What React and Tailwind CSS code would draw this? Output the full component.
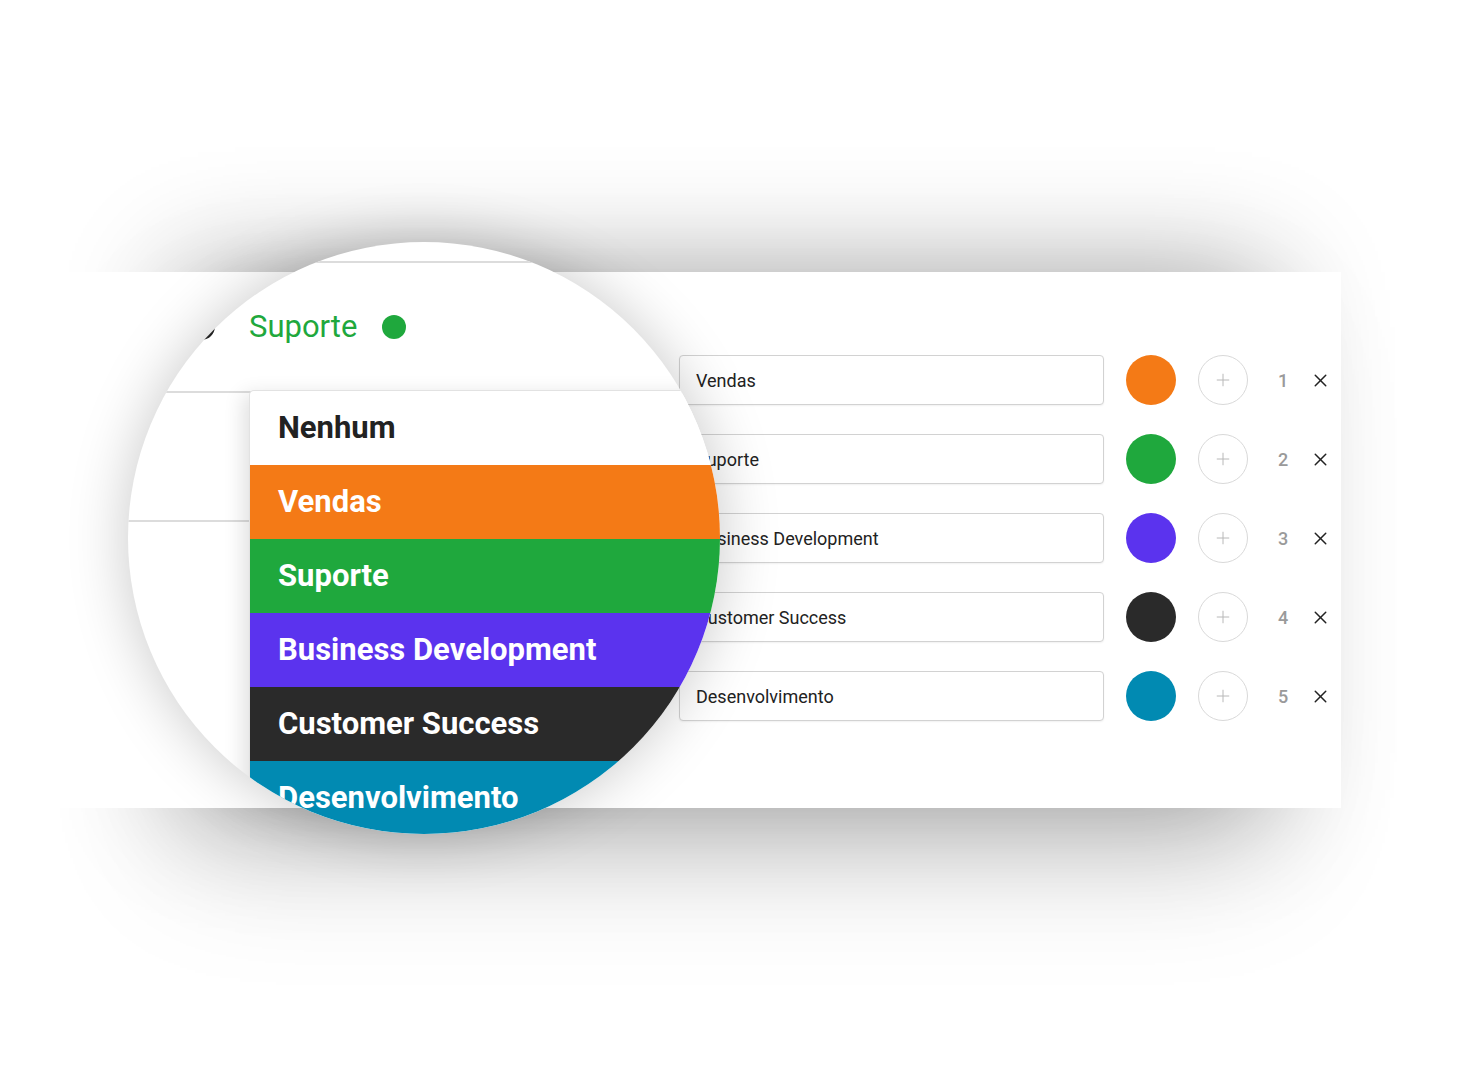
import React from 'react';
import { Plus, X } from 'lucide-react';

const TEAMS = [
  { name: 'Vendas', color: '#F47A16' },
  { name: 'Suporte', color: '#1FA83D' },
  { name: 'Business Development', color: '#5B33EE' },
  { name: 'Customer Success', color: '#2A2A2A' },
  { name: 'Desenvolvimento', color: '#018AB2' },
];

function TeamRow({ team, index }) {
  return (
    <div className="flex items-center">
      <div className="w-[425px] h-[50px] flex items-center pl-4 bg-white border border-[#d2d2d2] rounded-[4px] shadow-[0_1px_2px_rgba(0,0,0,0.06)] text-[18px] text-[#222]">
        {team.name}
      </div>
      <div className="ml-[22px] w-[50px] h-[50px] rounded-full" style={{ backgroundColor: team.color }} />
      <button className="ml-[22px] w-[50px] h-[50px] rounded-full border-[1.5px] border-[#d9d9d9] flex items-center justify-center">
        <Plus size={20} strokeWidth={1.2} className="text-[#b8b8b8]" />
      </button>
      <span className="ml-[22px] w-[26px] text-center text-[18px] font-medium text-[#9a9a9a]">{index + 1}</span>
      <span className="ml-[12px] w-[24px] flex justify-center text-[#222]">
        <X size={21} strokeWidth={1.7} />
      </span>
    </div>
  );
}

function Magnifier() {
  return (
    <div className="absolute left-[128px] top-[242px] w-[592px] h-[592px] rounded-full overflow-hidden bg-white z-20 shadow-[0_0_60px_rgba(0,0,0,0.22)]">
      <div className="mt-[19px] border-t-2 border-[#dcdcdc]" />
      <div className="h-[128px] flex items-center">
        <svg width="30" height="30" viewBox="0 0 30 30" className="ml-[60px]">
          <circle cx="14" cy="15" r="11" fill="none" stroke="#222" strokeWidth="3.5" />
        </svg>
        <span className="ml-[31px] text-[31px] text-[#1FA83D]">Suporte</span>
        <span className="ml-[25px] w-[24px] h-[24px] rounded-full bg-[#1FA83D]" />
      </div>
      <div className="h-[129px] border-t-2 border-[#dcdcdc]" />
      <div className="border-t-2 border-[#dcdcdc]" />

      {/* dropdown */}
      <div className="absolute left-[121px] top-[148px] w-[560px] rounded-tl-[5px] overflow-hidden border-t border-l border-[#e2e2e2] shadow-[-6px_4px_20px_rgba(0,0,0,0.12)] bg-white">
        <div className="h-[74px] flex items-center pl-[28px] text-[31px] font-bold text-[#222]">Nenhum</div>
        {TEAMS.map((t) => (
          <div
            key={t.name}
            className="h-[74px] flex items-center pl-[28px] text-[31px] font-bold text-white"
            style={{ backgroundColor: t.color }}
          >
            {t.name}
          </div>
        ))}
      </div>
    </div>
  );
}

export default function App() {
  return (
    <div className="relative w-[1480px] h-[1080px] bg-white overflow-hidden font-['Roboto',sans-serif]">
      <div className="pt-[272px] relative">
        {/* card shadow */}
        <div className="absolute left-[180px] top-[272px] w-[1090px] h-[536px] shadow-[0_0_110px_rgba(0,0,0,0.32),0_50px_130px_rgba(0,0,0,0.14)]" />
        <div className="relative z-10 w-[1341px] h-[536px] bg-white flex">
          <div className="w-[679px] shrink-0" />
          <div className="pt-[83px] flex flex-col gap-[29px]">
            {TEAMS.map((t, i) => (
              <TeamRow key={t.name} team={t} index={i} />
            ))}
          </div>
        </div>
      </div>
      <Magnifier />
    </div>
  );
}
